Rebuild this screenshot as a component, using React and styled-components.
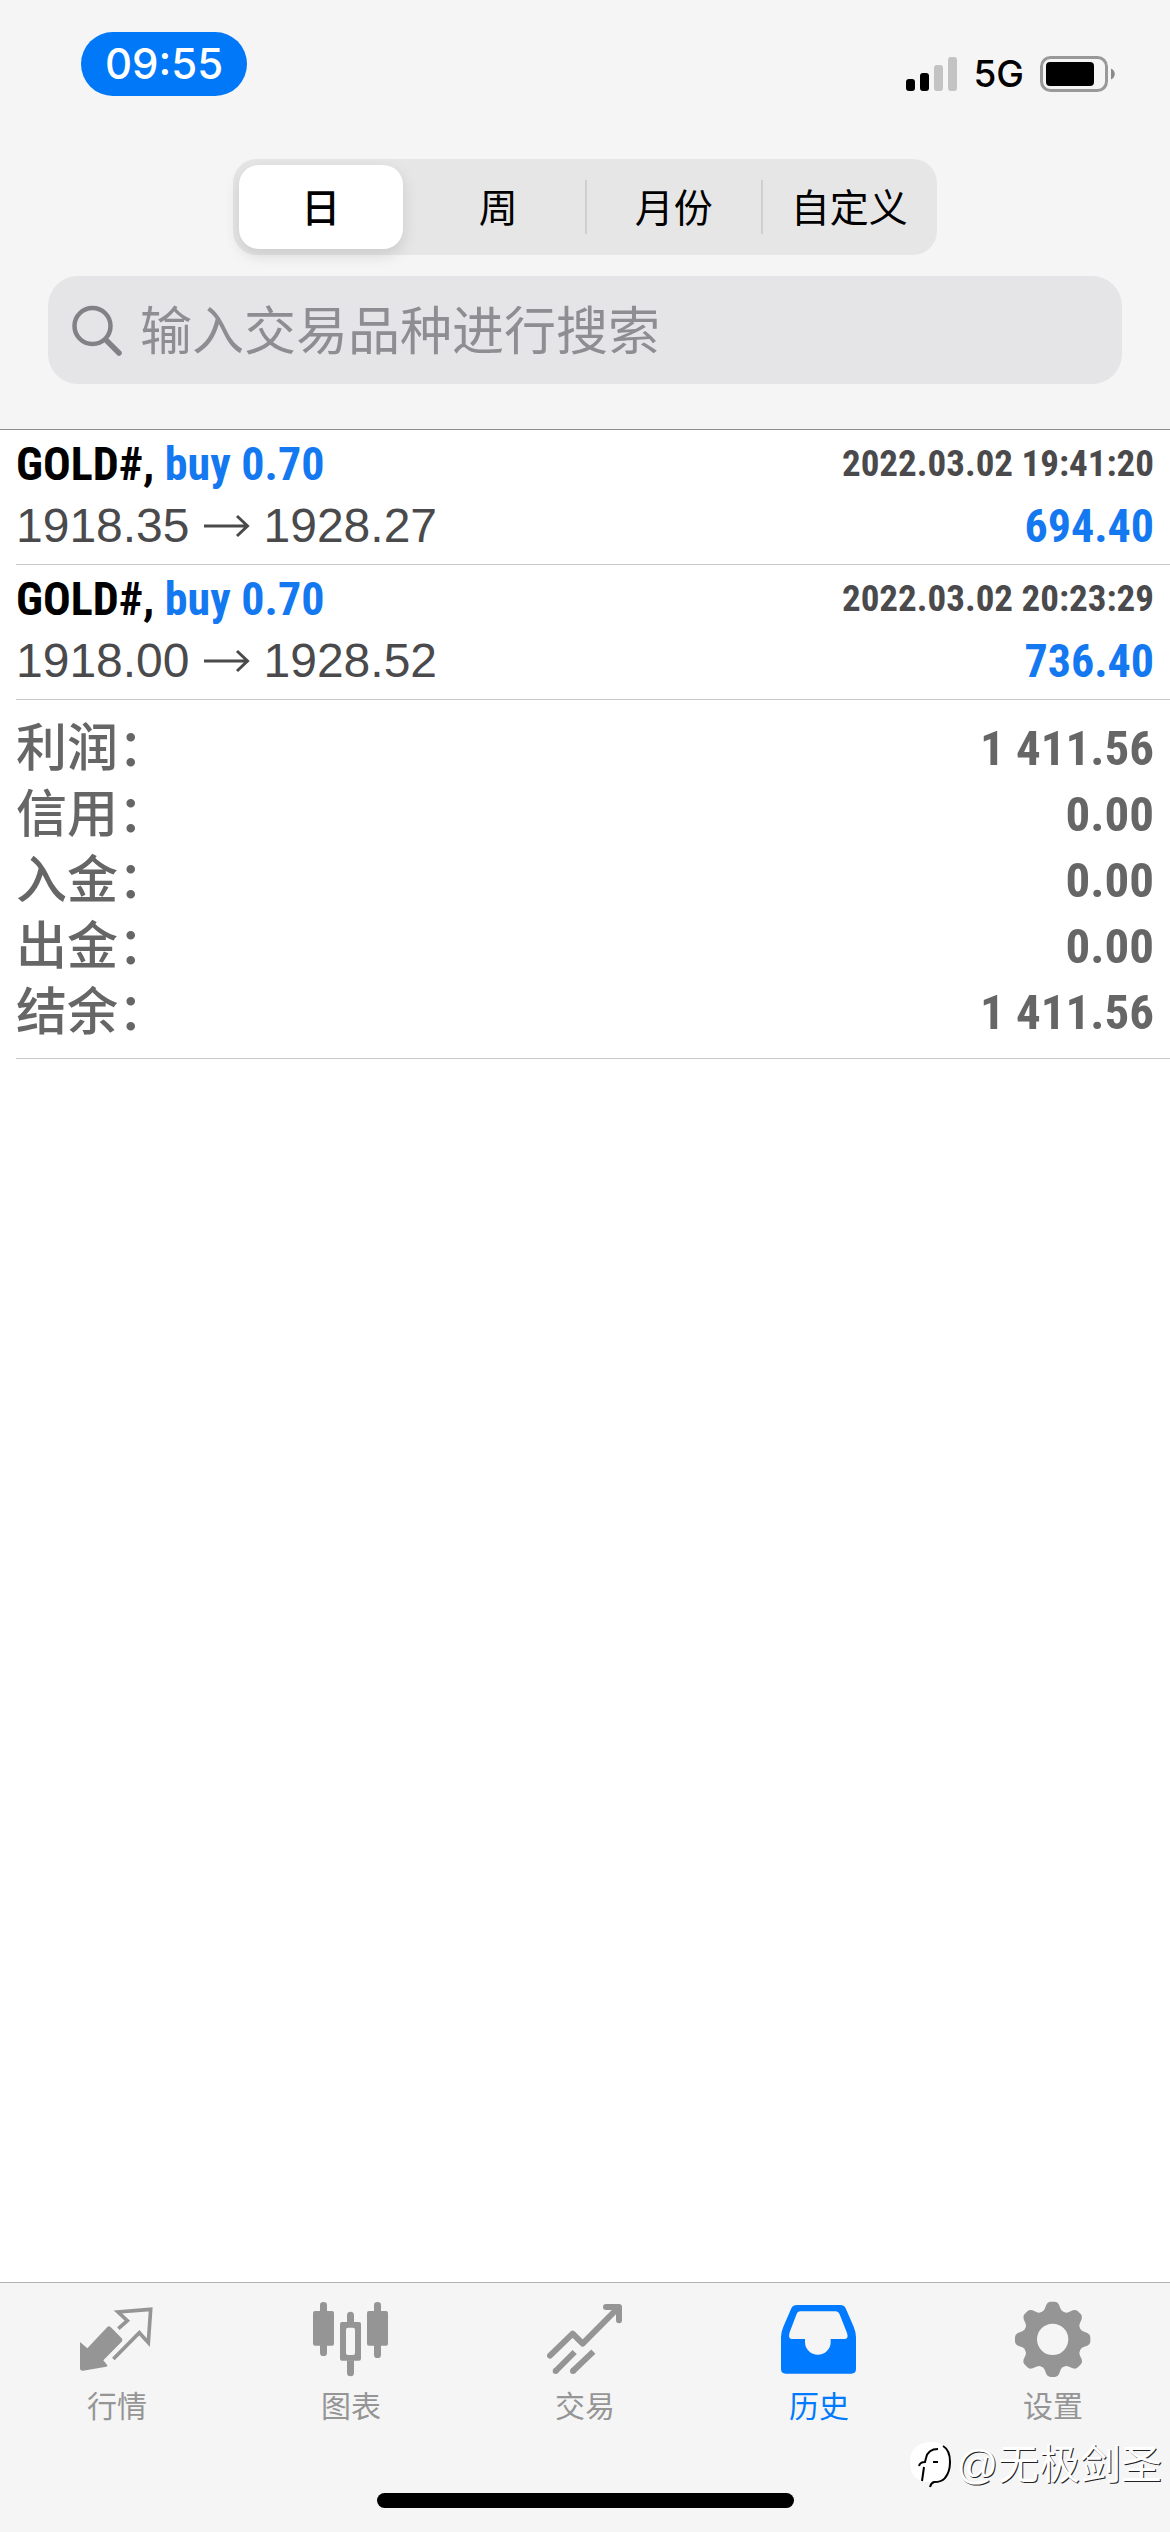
import React, { useState } from "react";
import styled, { createGlobalStyle } from "styled-components";

const BLUE = "#007aff";
const SANS = `"Liberation Sans", "Noto Sans CJK SC", sans-serif`;
const NARROW = `"Roboto Condensed", ${SANS}`;

const GlobalStyle = createGlobalStyle`
  * {
    box-sizing: border-box;
  }
  body {
    margin: 0;
    background-color: white;
    font-family: ${SANS};
  }
  button, input {
    font-family: inherit;
  }
`;

const Container = styled.div`
  display: flex;
  flex-direction: column;
  min-height: 100vh;
`;
const Header = styled.header`
  display: flex;
  flex-direction: column;
  align-items: center;
  padding: 32px 48px 45px;
  background-color: #f5f5f5;
  border-bottom: 1px solid #8e8e8e;
`;
const StatusBar = styled.div`
  display: flex;
  justify-content: space-between;
  align-items: flex-end;
  align-self: stretch;
  padding: 0 6px 0 33px;
  font-family: Inter, sans-serif;
`;
const Clock = styled.time`
  width: 166px;
  border-radius: 32px;
  background-color: #0078f8;
  color: white;
  font-size: 42px;
  font-weight: 500;
  line-height: 64px;
  text-align: center;
`;
const StatusIcons = styled.div`
  display: flex;
  align-items: center;
  gap: 16px;
  height: 36px;
  margin-bottom: 4px;
  font-size: 37px;
  font-weight: 500;
  line-height: 36px;
`;
const Segments = styled.div`
  display: flex;
  width: 704px;
  max-width: 100%;
  margin-top: 63px;
  border-radius: 24px;
  background-color: #e6e6e6;
`;
const Segment = styled.div`
  display: flex;
  flex: 1;
  align-items: center;
  height: 96px;
  padding: 6px;
  &:first-child {
    padding-right: 8px;
  }
`;
const Divider = styled.div`
  width: 2px;
  height: 54px;
  margin: 21px -1px;
  background-color: #cfcfcf;
`;
const SegmentButton = styled.button`
  width: 100%;
  height: 84px;
  padding: 0 0 4px;
  border: none;
  border-radius: 20px;
  background-color: ${(props) => (props.$active ? "white" : "transparent")};
  box-shadow: ${(props) =>
    props.$active ? "0 6px 16px rgba(0, 0, 0, 0.12)" : "none"};
  color: black;
  font-size: 39px;
  font-weight: ${(props) => (props.$active ? 500 : 400)};
  white-space: nowrap;
`;
const SearchBox = styled.label`
  display: flex;
  align-items: center;
  align-self: stretch;
  gap: 16px;
  height: 108px;
  margin-top: 21px;
  padding: 2px 24px 0;
  border-radius: 30px;
  background-color: #e5e5e7;
`;
const SearchInput = styled.input`
  flex: 1;
  min-width: 0;
  padding: 2px 0 0;
  border: none;
  outline: none;
  background: none;
  color: black;
  font-size: 52px;
  line-height: 76px;
  &::placeholder {
    color: #8e8e92;
    opacity: 1;
  }
`;

const Main = styled.main`
  flex: 1;
`;
const DealList = styled.ul`
  margin: 0;
  padding: 0 0 0 16px;
  list-style: none;
`;
const Deal = styled.li`
  padding: 3px 16px 7px 0;
  border-bottom: 1px solid #c8c8c8;
`;
const DealLine = styled.div`
  display: flex;
  justify-content: space-between;
  align-items: center;
  height: 62px;
  line-height: 62px;
  white-space: nowrap;
`;
const Symbol = styled.strong`
  color: black;
  font-family: ${NARROW};
  font-size: 46px;
`;
const Side = styled.span`
  color: #1478f0;
`;
const DealTime = styled.time`
  color: #4a4a4c;
  font-family: ${NARROW};
  font-size: 37px;
  font-weight: bold;
`;
const Prices = styled.span`
  display: flex;
  align-items: center;
  gap: 13px;
  color: #4a4a4c;
  font-size: 48px;
`;
const Profit = styled.strong`
  color: #1478f0;
  font-family: ${NARROW};
  font-size: 46px;
`;
const Summary = styled.dl`
  margin: 0 0 0 16px;
  padding: 16px 16px 12px 0;
  border-bottom: 1px solid #c8c8c8;
  color: #666666;
  line-height: 66px;
`;
const SummaryRow = styled.div`
  display: flex;
  justify-content: space-between;
  height: 66px;
`;
const SummaryName = styled.dt`
  font-size: 51px;
  font-weight: 500;
`;
const SummaryValue = styled.dd`
  margin: 0;
  font-family: ${NARROW};
  font-size: 49px;
  font-weight: bold;
`;

const Footer = styled.footer`
  position: relative;
  height: 250px;
  border-top: 1px solid #b2b2b2;
  background-color: #f5f5f5;
`;
const TabBar = styled.nav`
  display: flex;
`;
const Tab = styled.a`
  display: flex;
  flex: 1;
  flex-direction: column;
  align-items: center;
  gap: 8px;
  padding-top: 18px;
  color: ${(props) => (props.$active ? BLUE : "#959595")};
  font-size: 30px;
  line-height: 44px;
  text-decoration: none;
`;
const HomeIndicator = styled.div`
  width: 417px;
  height: 15px;
  margin: 64px auto 0;
  border-radius: 8px;
  background-color: black;
`;
// stamp over the bottom right corner
const Watermark = styled.div`
  position: absolute;
  right: 8px;
  bottom: 37px;
  display: flex;
  align-items: center;
  gap: 5px;
  color: white;
  font-size: 41px;
  line-height: 60px;
  text-shadow: 1px 1px 0 #222;
`;

const SignalIcon = () => (
  <svg width="51" height="36" viewBox="0 0 51 36" aria-hidden="true">
    <rect x="0" y="23" width="9" height="12" rx="3" />
    <rect x="14" y="17" width="9" height="18" rx="3" />
    <rect x="28" y="9" width="9" height="26" rx="3" fill="#c3c3c3" />
    <rect x="42" y="1" width="9" height="34" rx="3" fill="#c3c3c3" />
  </svg>
);

const BatteryIcon = () => (
  <svg width="76" height="36" viewBox="0 0 76 36" aria-hidden="true">
    <rect x="1.5" y="1.5" width="65" height="33" rx="9" fill="none" stroke="#999" strokeWidth="3" />
    <rect x="6" y="6" width="48" height="24" rx="4" />
    <path d="M71 12.5c5 2 5 9 0 11z" fill="#8a8a8a" />
  </svg>
);

const SearchIcon = () => (
  <svg width="52" height="52" viewBox="0 0 52 52" fill="none" stroke="#828286" strokeLinecap="round" aria-hidden="true">
    <circle cx="20.5" cy="21" r="18" strokeWidth="4.5" />
    <path d="M34 35l13 13" strokeWidth="5.5" />
  </svg>
);

const ArrowIcon = () => (
  <svg width="48" height="24" viewBox="0 0 48 24" fill="none" stroke="#4a4a4c" strokeWidth="3" role="img" aria-label="to">
    <path d="M1 12h44M34 2l10.500 10L34 22" />
  </svg>
);

const TabIcon = ({ children }) => (
  <svg width="76" height="76" viewBox="0 0 228 228" fill="currentColor" aria-hidden="true">
    {children}
  </svg>
);

const QuotesIcon = () => (
  <TabIcon>
    <path d="M3 123l22 19 60-64q5-5 10 0l33 34q5 5 0 10l-55 56 12 15q2 3-3 4l-70 12q-8 1-9-6z" />
    <path
      d="M118 83l27-24-28-26 98-8-7 100-27-30-78 79"
      fill="none"
      stroke="currentColor"
      strokeWidth="11"
    />
  </TabIcon>
);

const ChartIcon = () => (
  <TabIcon>
    <rect x="0" y="30" width="63" height="104" rx="6" />
    <rect x="21" y="3" width="21" height="162" rx="10" />
    <path
      fillRule="evenodd"
      d="M87 63h51q6 0 6 6v104q0 6-6 6H87q-6 0-6-6V69q0-6 6-6zm18 17q-6 0-6 6v70q0 6 6 6h15q6 0 6-6V86q0-6-6-6z"
    />
    <path d="M102 64V43a10 10 0 0121 0v21zM102 178v37a10 10 0 0021 0v-37z" />
    <rect x="162" y="30" width="63" height="104" rx="6" />
    <rect x="183" y="3" width="21" height="168" rx="10" />
  </TabIcon>
);

const TradeIcon = () => (
  <TabIcon>
    <g fill="none" stroke="currentColor" strokeWidth="18" strokeLinejoin="round">
      <path d="M9 164l68-66 30 30L214 20" strokeLinecap="round" />
      <path d="M177 18h39v40" strokeLinecap="round" />
      <path d="M26 210l57-57M78 210l61-58" />
    </g>
    <circle cx="26" cy="210" r="9" />
    <circle cx="78" cy="210" r="9" />
  </TabIcon>
);

const HistoryIcon = () => (
  <TabIcon>
    <path
      fillRule="evenodd"
      d="M48 12h130q11 0 16 10l24 55q7 16 7 32v95q0 14-14 14H14q-14 0-14-14v-95q0-16 7-32l24-55q5-10 17-10zm10 19q-8 0-12 10L26 94q-6 20 6 20h40v9a38 38 0 0077 0v-9h40q15 0 9-18l-21-53q-4-12-14-12z"
    />
  </TabIcon>
);

const SettingsIcon = () => (
  <TabIcon>
    <circle cx="113" cy="115" r="67" fill="none" stroke="currentColor" strokeWidth="40" />
    {[0, 45, 90, 135, 180, 225, 270, 315].map((angle) => (
      <path
        key={angle}
        d="M78 34q9-4 11-10l5-13q4-9 12-9h14q8 0 12 9l5 13q2 6 11 10v8l-18 14H96L78 42z"
        transform={`rotate(${angle} 113 115)`}
      />
    ))}
  </TabIcon>
);

const periods = ["日", "周", "月份", "自定义"];

const deals = [
  {
    time: "2022.03.02 19:41:20",
    open: "1918.35",
    close: "1928.27",
    profit: "694.40",
  },
  {
    time: "2022.03.02 20:23:29",
    open: "1918.00",
    close: "1928.52",
    profit: "736.40",
  },
];

const totals = [
  ["利润", "1 411.56"],
  ["信用", "0.00"],
  ["入金", "0.00"],
  ["出金", "0.00"],
  ["结余", "1 411.56"],
];

const tabs = [
  { id: "quotes", label: "行情", Icon: QuotesIcon },
  { id: "chart", label: "图表", Icon: ChartIcon },
  { id: "trade", label: "交易", Icon: TradeIcon },
  { id: "history", label: "历史", Icon: HistoryIcon },
  { id: "settings", label: "设置", Icon: SettingsIcon },
];

const App = () => {
  const [period, updatePeriod] = useState("日");
  const [searchQuery, updateSearchQuery] = useState("");
  const [activeTab, updateActiveTab] = useState("history");

  return (
    <Container>
      <GlobalStyle />
      <Header>
        <StatusBar>
          <Clock>09:55</Clock>
          <StatusIcons>
            <SignalIcon />
            <span>5G</span>
            <BatteryIcon />
          </StatusIcons>
        </StatusBar>

        <Segments>
          {periods.map((name, index) => (
            <React.Fragment key={name}>
              {index > 1 && <Divider />}
              <Segment>
                <SegmentButton
                  type="button"
                  aria-pressed={period === name}
                  $active={period === name}
                  onClick={() => updatePeriod(name)}
                >
                  {name}
                </SegmentButton>
              </Segment>
            </React.Fragment>
          ))}
        </Segments>

        <SearchBox>
          <SearchIcon />
          <SearchInput
            type="text"
            aria-label="输入交易品种进行搜索"
            placeholder="输入交易品种进行搜索"
            value={searchQuery}
            onChange={(event) => updateSearchQuery(event.target.value)}
          />
        </SearchBox>
      </Header>

      <Main>
        <DealList>
          {deals.map((deal) => (
            <Deal key={deal.time}>
              <DealLine>
                <Symbol>
                  GOLD#, <Side>buy 0.70</Side>
                </Symbol>
                <DealTime>{deal.time}</DealTime>
              </DealLine>
              <DealLine>
                <Prices>
                  {deal.open}
                  <ArrowIcon />
                  {deal.close}
                </Prices>
                <Profit>{deal.profit}</Profit>
              </DealLine>
            </Deal>
          ))}
        </DealList>

        <Summary>
          {totals.map(([name, value]) => (
            <SummaryRow key={name}>
              <SummaryName>{name}：</SummaryName>
              <SummaryValue>{value}</SummaryValue>
            </SummaryRow>
          ))}
        </Summary>
      </Main>

      <Footer>
        <TabBar>
          {tabs.map(({ id, label, Icon }) => (
            <Tab
              key={id}
              href={`#${id}`}
              $active={activeTab === id}
              onClick={() => updateActiveTab(id)}
            >
              <Icon />
              {label}
            </Tab>
          ))}
        </TabBar>
        <HomeIndicator />
        <Watermark>
          <svg width="42" height="48" viewBox="0 0 42 48" aria-hidden="true">
            <path d="M20 1h4q17 1 17 20 0 18-16 20l-4 5-1-5Q1 41 1 21 1 3 20 1z" fill="white" />
            <path
              d="M29 8q-10 0-12 9l-1 4q-5 0-6 4M15 26l-2 14M24 21h5"
              fill="none"
              stroke="black"
              strokeWidth="2"
            />
            <path
              d="M34 5q7 4 7 16 0 10-5 16-3 4-11 4-3 1-4 5"
              fill="none"
              stroke="black"
              strokeWidth="2"
            />
          </svg>
          @无极剑圣
        </Watermark>
      </Footer>
    </Container>
  );
};

export default App;
